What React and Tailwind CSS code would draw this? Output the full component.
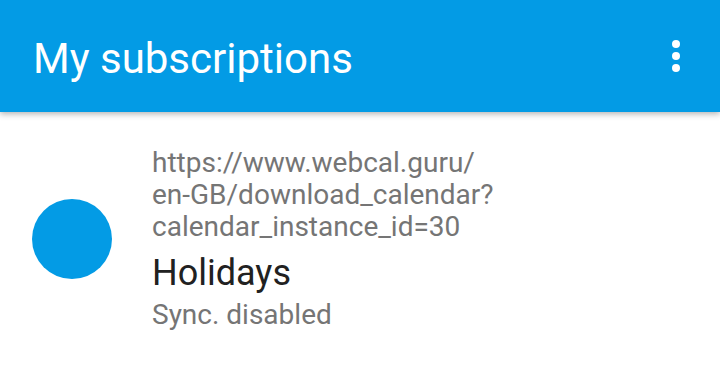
export default function App() {
  return (
    <div className="w-[720px] h-[367px] bg-white overflow-hidden font-['Roboto',sans-serif]">
      {/* Toolbar */}
      <div className="relative z-10 h-[112px] bg-[#039be5] flex items-start pl-[33px] pr-[40px] shadow-[0_2px_6px_rgba(0,0,0,0.3)]">
        <h1 className="flex-1 pt-[38px] text-white text-[42px] leading-[42px] font-normal">
          My subscriptions
        </h1>
        <div className="pt-[40px] flex flex-col gap-[4px] items-center">
          <span className="block w-[8px] h-[8px] rounded-full bg-white" />
          <span className="block w-[8px] h-[8px] rounded-full bg-white" />
          <span className="block w-[8px] h-[8px] rounded-full bg-white" />
        </div>
      </div>

      {/* Subscription row */}
      <div className="flex items-center pl-[32px] pt-[35px]">
        <div className="w-[80px] h-[80px] rounded-full bg-[#039be5] shrink-0" />
        <div className="ml-[40px] flex flex-col">
          <div className="text-[#757575] text-[28px] leading-[32px]">
            https://www.webcal.guru/
            <br />
            en-GB/download_calendar?
            <br />
            calendar_instance_id=30
          </div>
          <div className="text-[#212121] text-[36px] leading-[52px] mt-[4px]">Holidays</div>
          <div className="text-[#757575] text-[28px] leading-[32px]">Sync. disabled</div>
        </div>
      </div>
    </div>
  );
}
